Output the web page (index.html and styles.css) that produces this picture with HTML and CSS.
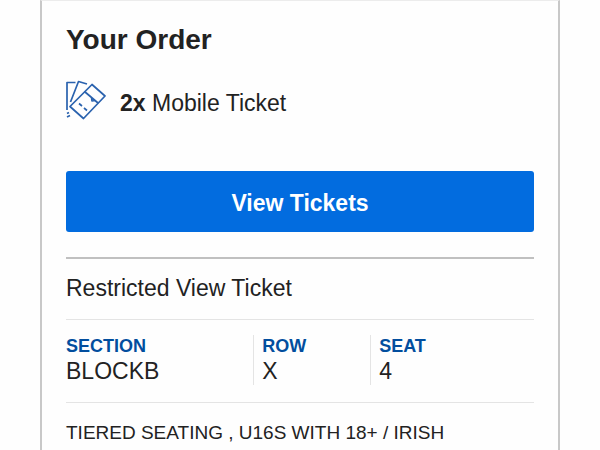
FILE: index.html
```html
<!DOCTYPE html>
<html lang="en">
<head>
  <meta charset="utf-8">
  <meta name="viewport" content="width=device-width, initial-scale=1">
  <title>Your Order</title>
  <link rel="stylesheet" href="styles.css">
</head>
<body>
  <main class="card">
    <h1 class="title">Your Order</h1>
    <div class="summary">
      <svg class="icon" viewBox="0 0 40 40" aria-hidden="true">
        <path d="M1 30V2.500H9.500M1 33.500L3 32.500M1 37L4 35.500"/>
        <path d="M4.500 22L12.500 1.500L21 4"/>
        <path d="M26 4.500L39 16L17.500 38.500L4 26.500Z"/>
        <path d="M18.500 11.500L32 23M25.500 17.500L26 21L29 20.500"/>
        <path d="M13 23.500L16 26M18 28L21 30.500"/>
      </svg>
      <p class="line"><strong>2x</strong> Mobile Ticket</p>
    </div>
    <button class="button" type="button">View Tickets</button>
    <section class="ticket">
      <h2 class="line kind">Restricted View Ticket</h2>
      <dl class="seats">
        <div class="seat"><dt>SECTION</dt><dd>BLOCKB</dd></div>
        <div class="seat"><dt>ROW</dt><dd>X</dd></div>
        <div class="seat"><dt>SEAT</dt><dd>4</dd></div>
      </dl>
      <p class="note">TIERED SEATING , U16S WITH 18+ / IRISH</p>
    </section>
  </main>
</body>
</html>
```
FILE: styles.css
```css
* {
  box-sizing: border-box;
}

body {
  margin: 0;
  background: #fefefe;
  color: #222;
  font-family: "Liberation Sans", Arial, sans-serif;
}

h1, h2, p, dl, dd {
  margin: 0;
}

.card {
  min-height: 100vh;
  margin: 0 40px;
  padding: 23px 24px 0;
  border: 2px solid #c8c8c8;
  border-top: 1px solid #ececec;
  border-bottom: 0;
}

.title {
  font-size: 28px;
  line-height: 32px;
}

.summary {
  display: flex;
  align-items: flex-start;
  gap: 14px;
  padding: 24px 0 51px;
}

.icon {
  flex: none;
  width: 40px;
  height: 40px;
  fill: none;
  stroke: #2a62ae;
  stroke-width: 1.7;
  stroke-linejoin: round;
}

.line {
  font-size: 23px;
  font-weight: 400;
  line-height: 28px;
}

.summary .line {
  padding-top: 9px;
}

.button {
  display: block;
  width: 100%;
  padding: 18px 24px 15px;
  border: 0;
  border-radius: 3px;
  background: #026cdf;
  color: #fff;
  font: 700 23px/28px "Liberation Sans", Arial, sans-serif;
}

.ticket {
  margin-top: 25px;
  border-top: 2px solid #c0c0c0;
}

.kind {
  padding: 15px 0 17px;
}

.seats {
  display: grid;
  grid-template-columns: 8fr 5fr 7fr;
  padding: 15px 0 17px;
  border-top: 1px solid #e4e4e4;
  border-bottom: 1px solid #e4e4e4;
}

.seat + .seat {
  padding-left: 8px;
  border-left: 1px solid #e4e4e4;
}

.seat dt {
  color: #024e9e;
  font-size: 18px;
  font-weight: 700;
  line-height: 22px;
}

.seat dd {
  font-size: 23px;
  line-height: 28px;
}

.note {
  padding-top: 18px;
  font-size: 19px;
  line-height: 24px;
}
```
